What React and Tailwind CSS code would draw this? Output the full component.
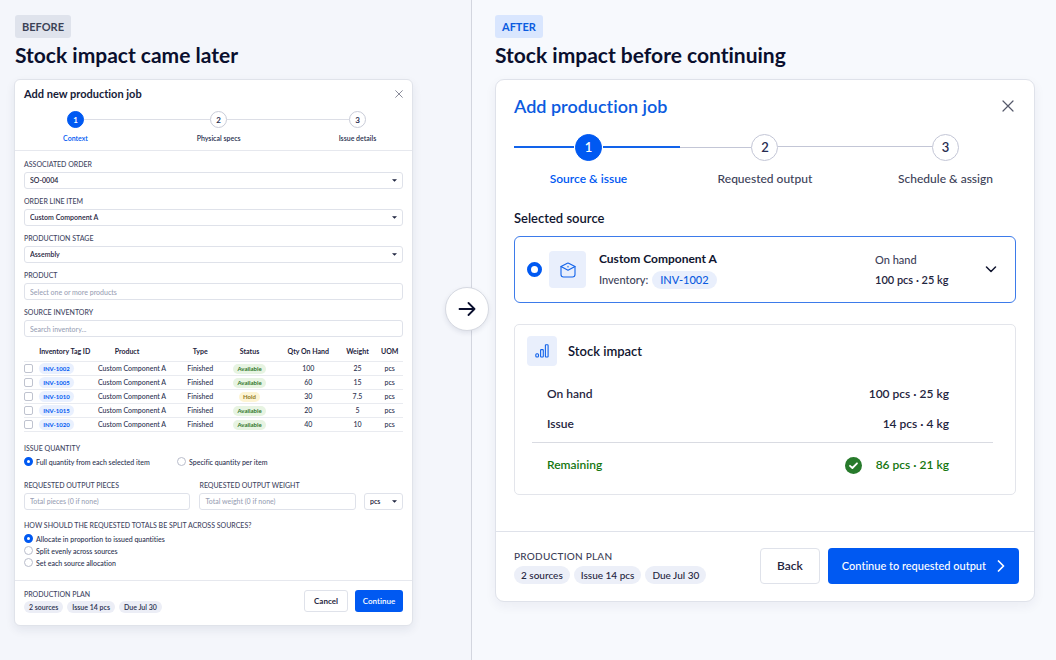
import React, { useState } from 'react';

const inventory = [
  { id: 'INV-1002', status: 'Available', qty: 100, weight: 25 },
  { id: 'INV-1005', status: 'Available', qty: 60, weight: 15 },
  { id: 'INV-1010', status: 'Hold', qty: 30, weight: 7.5 },
  { id: 'INV-1015', status: 'Available', qty: 20, weight: 5 },
  { id: 'INV-1020', status: 'Available', qty: 40, weight: 10 }
];

const splitOptions = [
  'Allocate in proportion to issued quantities',
  'Split evenly across sources',
  'Set each source allocation'
];

const planItems = ['2 sources', 'Issue 14 pcs', 'Due Jul 30'];

const CloseIcon = ({ className }) => (
  <svg className={className} viewBox="0 0 12 12" fill="none" stroke="currentColor" strokeLinecap="round">
    <path d="M1 1l10 10M11 1L1 11" strokeWidth="1.200" />
  </svg>
);

const fieldClass =
  'block h-[17px] w-full appearance-none rounded-[3px] border border-[#dfe2ea] bg-white px-[5px] text-[7px] leading-[15px] font-semibold text-[#1f2540] placeholder:font-medium placeholder:text-[#9a9fb5]';

const FieldLabel = ({ htmlFor, children }) => (
  <label htmlFor={htmlFor} className="mb-[3px] block text-[7px] leading-[10px] font-medium whitespace-nowrap text-[#3f4562]">
    {children}
  </label>
);

const Select = ({ id, value, label }) => (
  <div className="relative">
    <select id={id} aria-label={label} defaultValue={value} className={fieldClass}>
      <option>{value}</option>
    </select>
    <svg className="pointer-events-none absolute top-[7px] right-[6px] h-[3px] w-[5px]" viewBox="0 0 6 3" fill="#1f2540">
      <path d="M0 0h6L3 3z" />
    </svg>
  </div>
);

const radioSmall =
  'h-[9px] w-[9px] shrink-0 appearance-none rounded-full border border-[#b9bdcb] bg-white checked:border-[3px] checked:border-[#0059f2]';

const RadioSmall = ({ name, label, checked, onChange }) => (
  <label className="flex items-center gap-[3px] text-[7px] leading-3 font-medium whitespace-nowrap text-[#2b3150]">
    <input type="radio" name={name} checked={checked} onChange={onChange} className={radioSmall} />
    {label}
  </label>
);

const StepSmall = ({ number, label, active }) => (
  <li className="flex w-[17px] shrink-0 flex-col items-center">
    <span
      className={`flex h-[17px] w-[17px] items-center justify-center rounded-full border text-[8px] leading-none font-bold ${
        active ? 'border-[#0059f2] bg-[#0059f2] text-white' : 'border-[#c9ccd8] bg-white text-[#2b3150]'
      }`}
    >
      {number}
    </span>
    <span className={`mt-[5px] text-[7px] leading-[10px] font-semibold whitespace-nowrap ${active ? 'text-[#0059f2]' : 'text-[#2b3150]'}`}>
      {label}
    </span>
  </li>
);

const StepLarge = ({ number, label, active }) => (
  <li className="flex w-[27px] shrink-0 flex-col items-center">
    <span
      className={`flex h-[27px] w-[27px] items-center justify-center rounded-full border text-[13px] leading-none font-semibold ${
        active ? 'border-[#0059f2] bg-[#0059f2] text-white' : 'border-[#c3c6d6] bg-white text-[#272c50]'
      }`}
    >
      {number}
    </span>
    <span className={`mt-2 text-[12px] leading-5 whitespace-nowrap ${active ? 'font-semibold text-[#0059f2]' : 'font-medium text-[#3c4158]'}`}>
      {label}
    </span>
  </li>
);

const BeforeDialog = () => {
  const [selected, setSelected] = useState([]);
  const [issueMode, setIssueMode] = useState('full');
  const [split, setSplit] = useState(splitOptions[0]);

  const toggle = (id) => {
    setSelected(prev => (prev.includes(id) ? prev.filter(item => item !== id) : [...prev, id]));
  };

  return (
    <form className="rounded-md border border-[#e0e3ea] bg-white shadow-[0_4px_10px_rgba(30,40,80,0.08)]" onSubmit={(e) => e.preventDefault()}>
      {/* Header and steps */}
      <div className="border-b border-[#e6e8ee] px-[9px] pt-[6px] pb-[7px]">
        <div className="flex items-center justify-between">
          <h2 className="text-[11px] leading-4 font-bold text-[#161b38]">Add new production job</h2>
          <button type="button" aria-label="Close" className="text-[#6b6f80]">
            <CloseIcon className="h-2 w-2" />
          </button>
        </div>
        <ol className="mt-[9px] flex pr-[37px] pl-[43px]">
          <StepSmall number="1" label="Context" active />
          <li aria-hidden="true" className="mt-2 h-px flex-[30] bg-[#dcdee6]" />
          <StepSmall number="2" label="Physical specs" />
          <li aria-hidden="true" className="mt-2 h-px flex-[29] bg-[#dcdee6]" />
          <StepSmall number="3" label="Issue details" />
        </ol>
      </div>

      <div className="px-[9px] pt-2 pb-[11px]">
        <div className="flex flex-col gap-[7px]">
          <div>
            <FieldLabel htmlFor="order">ASSOCIATED ORDER</FieldLabel>
            <Select id="order" value="SO-0004" />
          </div>
          <div>
            <FieldLabel htmlFor="line-item">ORDER LINE ITEM</FieldLabel>
            <Select id="line-item" value="Custom Component A" />
          </div>
          <div>
            <FieldLabel htmlFor="stage">PRODUCTION STAGE</FieldLabel>
            <Select id="stage" value="Assembly" />
          </div>
          <div>
            <FieldLabel htmlFor="product">PRODUCT</FieldLabel>
            <input id="product" type="text" placeholder="Select one or more products" className={fieldClass} />
          </div>
          <div>
            <FieldLabel htmlFor="search">SOURCE INVENTORY</FieldLabel>
            <input id="search" type="text" placeholder="Search inventory..." className={fieldClass} />
          </div>
        </div>

        {/* Inventory table */}
        <table className="mt-[6px] w-full table-fixed text-center text-[7px] leading-[13px] font-medium whitespace-nowrap text-[#2b3150]">
          <thead>
            <tr className="h-[18px] border-b border-[#e9ebf0] text-[#1f2540]">
              <th className="w-[4%]" aria-label="Select" />
              <th className="w-[12%] text-left font-bold">Inventory Tag ID</th>
              <th className="w-[25%] pl-3 pr-[22px] font-bold">Product</th>
              <th className="w-[11%] font-bold">Type</th>
              <th className="w-[15%] font-bold">Status</th>
              <th className="w-[16%] font-bold">Qty On Hand</th>
              <th className="w-[10%] font-bold">Weight</th>
              <th className="w-[7%] font-bold">UOM</th>
            </tr>
          </thead>
          <tbody>
            {inventory.map(item => (
              <tr key={item.id} className="h-[14px] border-b border-[#e9ebf0]">
                <td>
                  <input
                    type="checkbox"
                    aria-label={item.id}
                    checked={selected.includes(item.id)}
                    onChange={() => toggle(item.id)}
                    className="block h-[9px] w-[9px] appearance-none rounded-[2px] border border-[#bfc3cf] bg-white checked:bg-[#0059f2]"
                  />
                </td>
                <td className="text-left">
                  <span className="inline-block rounded-full bg-[#e9f0fe] px-1 text-[6px] leading-[11px] font-bold text-[#0059f2]">{item.id}</span>
                </td>
                <td>Custom Component A</td>
                <td>Finished</td>
                <td>
                  <span
                    className={`inline-block rounded-full px-1 text-[6px] leading-[10px] font-bold ${
                      item.status === 'Hold' ? 'bg-[#fdf4d3] text-[#8d7420]' : 'bg-[#e7f4e2] text-[#31752b]'
                    }`}
                  >
                    {item.status}
                  </span>
                </td>
                <td>{item.qty}</td>
                <td>{item.weight}</td>
                <td>pcs</td>
              </tr>
            ))}
          </tbody>
        </table>

        {/* Issue quantity */}
        <fieldset className="mt-[11px]">
          <legend className="text-[7px] leading-[10px] font-medium text-[#3f4562]">ISSUE QUANTITY</legend>
          <div className="mt-[3px] flex">
            <div className="w-[153px]">
              <RadioSmall name="issue" label="Full quantity from each selected item" checked={issueMode === 'full'} onChange={() => setIssueMode('full')} />
            </div>
            <RadioSmall name="issue" label="Specific quantity per item" checked={issueMode === 'specific'} onChange={() => setIssueMode('specific')} />
          </div>
        </fieldset>

        {/* Requested output */}
        <div className="mt-3 flex items-end">
          <div className="mr-[9px] flex-[167]">
            <FieldLabel htmlFor="pieces">REQUESTED OUTPUT PIECES</FieldLabel>
            <input id="pieces" type="text" placeholder="Total pieces (0 if none)" className={fieldClass} />
          </div>
          <div className="mr-2 flex-[157]">
            <FieldLabel htmlFor="weight">REQUESTED OUTPUT WEIGHT</FieldLabel>
            <input id="weight" type="text" placeholder="Total weight (0 if none)" className={fieldClass} />
          </div>
          <div className="w-[39px]">
            <Select id="unit" label="Unit" value="pcs" />
          </div>
        </div>

        {/* Split */}
        <fieldset className="mt-[10px]">
          <legend className="text-[7px] leading-[10px] font-medium text-[#3f4562]">
            HOW SHOULD THE REQUESTED TOTALS BE SPLIT ACROSS SOURCES?
          </legend>
          <div className="mt-[3px]">
            {splitOptions.map(option => (
              <RadioSmall key={option} name="split" label={option} checked={split === option} onChange={() => setSplit(option)} />
            ))}
          </div>
        </fieldset>
      </div>

      {/* Footer */}
      <div className="flex items-center justify-between border-t border-[#e6e8ee] px-[9px] pt-2 pb-3">
        <div>
          <p className="text-[7px] leading-[10px] font-medium text-[#3f4562]">PRODUCTION PLAN</p>
          <ul className="mt-[2px] flex gap-1">
            {planItems.map(item => (
              <li key={item} className="rounded-full bg-[#eceef6] px-[5px] text-[7px] leading-3 font-semibold text-[#2b3150]">{item}</li>
            ))}
          </ul>
        </div>
        <div className="flex gap-[7px]">
          <button type="button" className="h-[22px] w-11 rounded-[3px] border border-[#dfe2ea] bg-white text-[8px] font-bold text-[#1f2540]">
            Cancel
          </button>
          <button type="submit" className="h-[22px] w-12 rounded-[3px] bg-[#0059f2] text-[8px] font-semibold text-white">
            Continue
          </button>
        </div>
      </div>
    </form>
  );
};

const AfterDialog = () => (
  <form className="rounded-[9px] border border-[#dfe2ea] bg-white shadow-[0_4px_12px_rgba(30,40,80,0.06)]" onSubmit={(e) => e.preventDefault()}>
    <div className="px-[18px] pt-3">
      <div className="flex items-center justify-between">
        <h2 className="text-[18px] leading-7 font-semibold text-[#0b5be0]">Add production job</h2>
        <button type="button" aria-label="Close" className="mr-[2px] text-[#55596a]">
          <CloseIcon className="h-3 w-3" />
        </button>
      </div>

      <ol className="mt-[14px] flex pr-[57px]">
        <li aria-hidden="true" className="mt-3 mr-px h-[2px] w-[60px] bg-[#1263ea]" />
        <StepLarge number="1" label="Source &amp; issue" active />
        <li aria-hidden="true" className="mt-3 ml-px flex h-[2px] flex-[29] items-center">
          <span className="h-[2px] w-[52%] bg-[#1263ea]" />
          <span className="h-px w-[48%] bg-[#c3c6d6]" />
        </li>
        <StepLarge number="2" label="Requested output" />
        <li aria-hidden="true" className="mt-3 h-px flex-[30] bg-[#c3c6d6]" />
        <StepLarge number="3" label="Schedule &amp; assign" />
      </ol>

      {/* Selected source */}
      <h3 className="mt-[19px] text-[13px] leading-5 font-semibold text-[#10152f]">Selected source</h3>
      <div className="mt-2 flex h-[67px] items-center rounded-md border border-[#3d7bea] pr-[18px] pl-3">
        <input
          type="radio"
          id="source"
          name="source"
          defaultChecked
          className="h-[15px] w-[15px] shrink-0 appearance-none rounded-full border border-[#b9bdcb] bg-white checked:border-4 checked:border-[#0059f2]"
        />
        <span className="ml-[7px] flex h-[37px] w-[37px] shrink-0 items-center justify-center rounded bg-[#e9effc]">
          <svg className="h-4 w-4" viewBox="0 0 16 16" fill="none" stroke="#1263ea" strokeWidth="1.1" strokeLinejoin="round" strokeLinecap="round">
            <path d="M1 4.500L7.400 1.200Q8 .9 8.600 1.200L15 4.500V12.500Q15 15 12.500 15H3.500Q1 15 1 12.500Z" />
            <path d="M1 4.500L8 8.200L15 4.500" />
            <path d="M8 4.400v.5" />
          </svg>
        </span>
        <label htmlFor="source" className="ml-[13px] flex-1">
          <span className="block text-[12px] leading-5 font-bold text-[#10152f]">Custom Component A</span>
          <span className="mt-px flex items-center gap-1 text-[11px] leading-5 font-medium text-[#3c4158]">
            Inventory:
            <span className="rounded-full bg-[#e9effc] px-2 leading-[18px] text-[#0b5be0]">INV-1002</span>
          </span>
        </label>
        <div className="w-[110px] text-[11px] leading-5 whitespace-nowrap">
          <p className="font-medium text-[#3c4158]">On hand</p>
          <p className="font-semibold text-[#1f2540]">100 pcs · 25 kg</p>
        </div>
        <button type="button" aria-label="Show sources" className="text-[#10152f]">
          <svg className="h-[7px] w-3" viewBox="0 0 12 7" fill="none" stroke="currentColor" strokeWidth="1.5" strokeLinecap="round" strokeLinejoin="round">
            <path d="M1.500 1L6 5.500L10.500 1" />
          </svg>
        </button>
      </div>

      {/* Stock impact */}
      <section className="mt-[21px] rounded-[5px] border border-[#e3e5eb] px-3 pt-[11px] pb-[15px]">
        <div className="flex items-center gap-[11px]">
          <span className="flex h-[30px] w-[30px] items-center justify-center rounded bg-[#e9effc]">
            <svg className="h-[14px] w-[14px]" viewBox="0 0 14 14" fill="none" stroke="#1263ea" strokeWidth="1.1" strokeLinejoin="round">
              <rect x="0.800" y="9.800" width="2.700" height="3.200" rx="1" />
              <rect x="5.600" y="5.600" width="2.700" height="7.400" rx="0.600" />
              <rect x="10.400" y="0.800" width="2.700" height="12.200" rx="0.600" />
            </svg>
          </span>
          <h3 className="text-[13px] leading-5 font-semibold text-[#10152f]">Stock impact</h3>
        </div>
        <dl className="mt-3 mr-[10px] ml-[5px] text-[12px] font-semibold text-[#1f2540]">
          <div className="flex h-[31px] items-center justify-between pr-11 pl-[15px]">
            <dt>On hand</dt>
            <dd>100 pcs · 25 kg</dd>
          </div>
          <div className="flex h-[34px] items-center justify-between border-b border-[#d9dbe2] pr-11 pb-[3px] pl-[15px]">
            <dt>Issue</dt>
            <dd>14 pcs · 4 kg</dd>
          </div>
          <div className="mt-2 flex h-7 items-center justify-between pr-11 pl-[15px] text-[#14760f]">
            <dt>Remaining</dt>
            <dd className="flex items-center gap-[14px]">
              <svg className="h-[17px] w-[17px]" viewBox="0 0 17 17" fill="none">
                <circle cx="8.500" cy="8.500" r="8.500" fill="#277a2b" />
                <path d="M5 8.800L7.400 11L12 6.300" stroke="#fff" strokeWidth="1.800" strokeLinecap="round" strokeLinejoin="round" />
              </svg>
              86 pcs · 21 kg
            </dd>
          </div>
        </dl>
      </section>
    </div>

    {/* Footer */}
    <div className="mt-9 flex items-center justify-between border-t border-[#dfe2ea] pt-4 pr-[15px] pb-[17px] pl-[18px]">
      <div>
        <p className="text-[10px] leading-4 font-medium tracking-wide text-[#3c4158]">PRODUCTION PLAN</p>
        <ul className="mt-[2px] flex gap-1">
          {planItems.map(item => (
            <li key={item} className="rounded-full bg-[#eceff8] px-[7px] text-[10px] leading-[18px] font-medium whitespace-nowrap text-[#1f2540]">{item}</li>
          ))}
        </ul>
      </div>
      <div className="flex gap-2">
        <button type="button" className="h-9 w-[60px] rounded border border-[#dfe2ea] bg-white text-[12px] font-semibold text-[#1f2540]">
          Back
        </button>
        <button type="submit" className="flex h-9 items-center gap-[11px] rounded bg-[#0059f2] px-[14px] text-[11px] font-medium whitespace-nowrap text-white">
          Continue to requested output
          <svg className="h-3 w-2" viewBox="0 0 8 12" fill="none" stroke="currentColor" strokeWidth="1.700" strokeLinecap="round" strokeLinejoin="round">
            <path d="M1.500 1L6.500 6L1.500 11" />
          </svg>
        </button>
      </div>
    </div>
  </form>
);

const App = () => (
  <main className="relative grid min-h-screen grid-cols-[472fr_584fr] bg-[#f4f6fb] font-['Lato',sans-serif] [font-variant-ligatures:none]">
    <section className="border-r border-[#d3d6df] pt-[15px] pr-[58px] pb-8 pl-[14px]">
      <span className="ml-px block w-fit rounded-[3px] bg-[#dfe3ec] px-[7px] text-[11px] leading-[23px] font-bold text-[#3b4256]">BEFORE</span>
      <h1 className="mt-px mb-2 ml-px text-[21px] leading-8 font-bold text-[#0a0f2e]">Stock impact came later</h1>
      <BeforeDialog />
    </section>

    <section className="bg-[#f7f9fd] pt-[15px] pr-[21px] pb-8 pl-[23px]">
      <span className="block w-fit rounded-[3px] bg-[#d9e6fe] px-[7px] text-[11px] leading-[23px] font-bold text-[#0b5be0]">AFTER</span>
      <h1 className="mt-px mb-2 text-[21px] leading-8 font-bold text-[#0a0f2e]">Stock impact before continuing</h1>
      <AfterDialog />
    </section>

    {/* Arrow sitting on the divider */}
    <div className="absolute top-[287px] left-[445px] flex h-11 w-11 items-center justify-center rounded-full border border-[#d6d9e1] bg-white shadow-[0_2px_5px_rgba(30,40,80,0.10)]">
      <svg className="h-[14px] w-[18px]" viewBox="0 0 18 14" fill="none" stroke="#0a0f2e" strokeWidth="1.800" strokeLinecap="round" strokeLinejoin="round">
        <path d="M1.500 7H16.500M10.500 1L16.500 7L10.500 13" />
      </svg>
    </div>
  </main>
);

export default App;
